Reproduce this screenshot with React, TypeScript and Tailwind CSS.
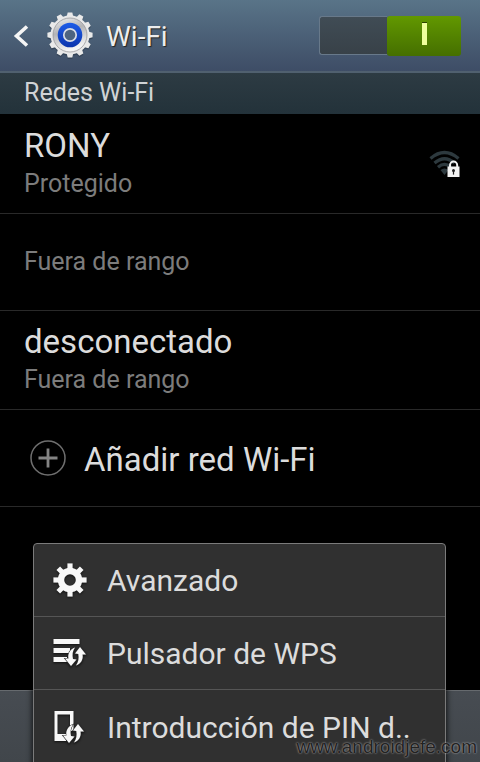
const font = "font-['Roboto','Noto_Sans',sans-serif]";

const spin = (count: number) =>
  Array.from({ length: count }, (_, i) => (360 / count) * i);

function SettingsIcon() {
  return (
    <svg width="48" height="50" viewBox="-24 -24 48 50" className="shrink-0">
      <defs>
        <linearGradient id="metal" x1="0" y1="0" x2="0.3" y2="1">
          <stop offset="0" stopColor="#f4f4f4" />
          <stop offset="0.45" stopColor="#b4b4b6" />
          <stop offset="1" stopColor="#f6f6f6" />
        </linearGradient>
        <linearGradient id="blue" x1="0" y1="0" x2="0" y2="1">
          <stop offset="0" stopColor="#1d5ce8" />
          <stop offset="1" stopColor="#0c35ad" />
        </linearGradient>
      </defs>
      <g fill="#2c3a4a" opacity="0.6" transform="translate(0 1.5)">
        <circle r="19.5" />
        {spin(12).map((deg) => (
          <path
            key={deg}
            d="M-3.4 -18 L-2.3 -22.6 H2.3 L3.4 -18Z"
            transform={`rotate(${deg})`}
          />
        ))}
      </g>
      <g fill="#e9e9e9">
        <circle r="19.5" />
        {spin(12).map((deg) => (
          <path
            key={deg}
            d="M-3.4 -18 L-2.3 -22.6 H2.3 L3.4 -18Z"
            transform={`rotate(${deg})`}
          />
        ))}
      </g>
      <circle r="17" fill="url(#metal)" stroke="#8f8f92" strokeWidth="0.7" />
      <circle r="12.3" fill="url(#blue)" />
      <circle r="6.2" fill="#4d6480" stroke="#d9dde6" strokeWidth="1.7" />
    </svg>
  );
}

function WifiLockIcon() {
  return (
    <svg width="32" height="28" viewBox="0 0 32 28">
      <g fill="none" stroke="#2d393e" strokeWidth="3.2">
        <path d="M1.5 8.5 Q15.5 -3.5 29.5 8.5" />
        <path d="M5.5 13 Q15.5 4.5 25.5 13" />
        <path d="M9 17.2 Q15.5 11.5 22 17.2" />
      </g>
      <path d="M11.5 20 Q15.5 16.8 19.5 20 L15.5 25Z" fill="#2d393e" />
      <path
        d="M21 17.5 V15.2 A3.5 3.5 0 0 1 28.2 15.2 V17.5"
        fill="none"
        stroke="#f2f2f2"
        strokeWidth="2"
      />
      <rect x="18.5" y="16.5" width="12" height="10.5" fill="#f2f2f2" />
      <circle cx="24.5" cy="20.5" r="1.5" fill="#222" />
      <rect x="23.9" y="21" width="1.2" height="3.6" fill="#222" />
    </svg>
  );
}

function PlusIcon() {
  return (
    <svg width="36" height="36" viewBox="0 0 36 36" className="shrink-0">
      <circle cx="18" cy="18" r="17" fill="none" stroke="#6f6f6f" strokeWidth="1.5" />
      <path d="M8.5 18 H27.5 M18 8.5 V27.5" stroke="#848484" strokeWidth="2.8" />
    </svg>
  );
}

function GearIcon() {
  return (
    <svg width="36" height="36" viewBox="-18 -18 36 36" className="shrink-0 drop-shadow-[0_1px_1px_#111]">
      <circle r="9" fill="none" stroke="#f8f8f8" strokeWidth="6.4" />
      {spin(8).map((deg) => (
        <rect
          key={deg}
          x="-2.6"
          y="-16.6"
          width="5.2"
          height="6"
          fill="#f8f8f8"
          transform={`rotate(${deg})`}
        />
      ))}
    </svg>
  );
}

function WpsArrows() {
  return (
    <g fill="#f8f8f8" stroke="#303030" strokeWidth="1.2" paintOrder="stroke">
      <path d="M10.5 0.5 C5.5 2 3 7 4 11.5 L0.5 11.5 L6.5 19 L12 12.5 L8.5 12 C7.5 8 8 4 10.5 0.5Z" />
      <path d="M11.5 18.5 C16.5 17 19 12 18 7.5 L21.5 7.5 L15.5 0 L10.5 6.5 L13.8 7 C14.6 11 14 15 11.5 18.5Z" />
    </g>
  );
}

function WpsPushIcon() {
  return (
    <svg width="36" height="36" viewBox="0 0 36 36" className="shrink-0 drop-shadow-[0_1px_1px_#111]">
      <path d="M1.5 4 H27.5 V9 H1.5Z M1.5 13 H18 V18 H1.5Z M1.5 22 H15 V27 H1.5Z" fill="#f8f8f8" />
      <g transform="translate(12.5 12)">
        <WpsArrows />
      </g>
    </svg>
  );
}

function WpsPinIcon() {
  return (
    <svg width="36" height="36" viewBox="0 0 36 36" className="shrink-0 drop-shadow-[0_1px_1px_#111]">
      <path d="M2.5 2 H21.5 V22 H14 V32 H2.5Z M5.5 5.5 V25 H18 V5.5Z" fillRule="evenodd" fill="#f8f8f8" />
      <g transform="translate(10.5 15)">
        <WpsArrows />
      </g>
    </svg>
  );
}

const menuItems = [
  { label: "Avanzado", icon: <GearIcon />, spacing: "tracking-[0px]" },
  { label: "Pulsador de WPS", icon: <WpsPushIcon />, spacing: "tracking-[0px]" },
  { label: "Introducción de PIN d..", icon: <WpsPinIcon />, spacing: "tracking-[0px]" },
];

export default function App() {
  return (
    <div className={`relative flex h-[762px] w-[480px] flex-col overflow-hidden bg-black text-[#dcdcdc] ${font}`}>
      <header className="flex h-[73px] shrink-0 items-center border-b-2 border-[#50606f] bg-linear-to-b from-[#597488] to-[#3e4d66] pr-[19px] pl-[13px]">
        <svg width="16" height="24" viewBox="0 0 16 24" className="shrink-0">
          <path d="M14 2.5 L3.5 12 L14 21.5" fill="none" stroke="#f5f5f5" strokeWidth="3.6" />
        </svg>
        <div className="ml-[17px]">
          <SettingsIcon />
        </div>
        <h1 className="ml-3 pt-[3px] text-[28px] leading-8 text-[#ededed] text-shadow-[1px_1px_1px_#222]">
          <span>Wi-Fi</span>
        </h1>
        <div className="ml-auto flex h-10 w-[142px] items-center">
          <div className="h-[39px] w-[68px] rounded-l-[3px] border border-r-0 border-[#68798a] bg-linear-to-b from-[#404c55] to-[#384148]" />
          <div className="flex h-10 w-[74px] items-center justify-center rounded-[3px] bg-linear-to-b from-[#629800] to-[#456f00]">
            <div className="mb-1 h-[23px] w-[5px] border-t border-[#2c4400] bg-[#efff9c]" />
          </div>
        </div>
      </header>

      <div className="h-[41px] shrink-0 bg-linear-to-b from-[#2d3b43] to-[#23323a] pt-1 pl-6 text-[25px] leading-8 text-[#d0d3d5]">
        <span>Redes Wi-Fi</span>
      </div>

      <ul className="shrink-0">
        <li className="flex h-[100px] items-center justify-between border-b border-[#292929] pr-[19px] pl-6">
          <div>
            <p className="text-[33px] leading-10"><span>RONY</span></p>
            <p className="text-[25px] leading-9 text-[#7c7c7c]"><span>Protegido</span></p>
          </div>
          <WifiLockIcon />
        </li>
        <li className="flex h-[97px] items-center border-b border-[#292929] pl-6">
          <p className="text-[25px] leading-9 text-[#7c7c7c]"><span>Fuera de rango</span></p>
        </li>
        <li className="flex h-[99px] items-center border-b border-[#292929] pl-6">
          <div>
            <p className="text-[33px] leading-10"><span>desconectado</span></p>
            <p className="text-[25px] leading-9 text-[#7c7c7c]"><span>Fuera de rango</span></p>
          </div>
        </li>
        <li className="flex h-[97px] items-center gap-[18px] border-b border-[#292929] pl-[30px]">
          <PlusIcon />
          <p className="pt-1 text-[33px] leading-10"><span>Añadir red Wi-Fi</span></p>
        </li>
      </ul>

      <footer className="mt-auto h-[72px] shrink-0 border-t border-[#666a6e] bg-linear-to-b from-[#474c52] to-[#41464b]" />

      <div className="absolute top-[543px] left-[33px] h-[230px] w-[413px] rounded-[4px] border border-[#7b7b7b] bg-[#303030] shadow-[0_0_6px_#000]">
        {menuItems.map((item) => (
          <div
            key={item.label}
            className="flex h-[73px] items-center gap-[19px] border-b border-[#555555] pl-[18px] last:border-b-0"
          >
            {item.icon}
            <span className={`pt-0.5 text-[30px] leading-9 whitespace-nowrap ${item.spacing}`}>{item.label}</span>
          </div>
        ))}
      </div>

      <p className="absolute right-[3px] bottom-[3px] font-['Liberation_Sans',sans-serif] text-[19px] leading-6 text-[#222] text-shadow-[0_0_2px_#ccc]">
        www.androidjefe.com
      </p>
    </div>
  );
}
